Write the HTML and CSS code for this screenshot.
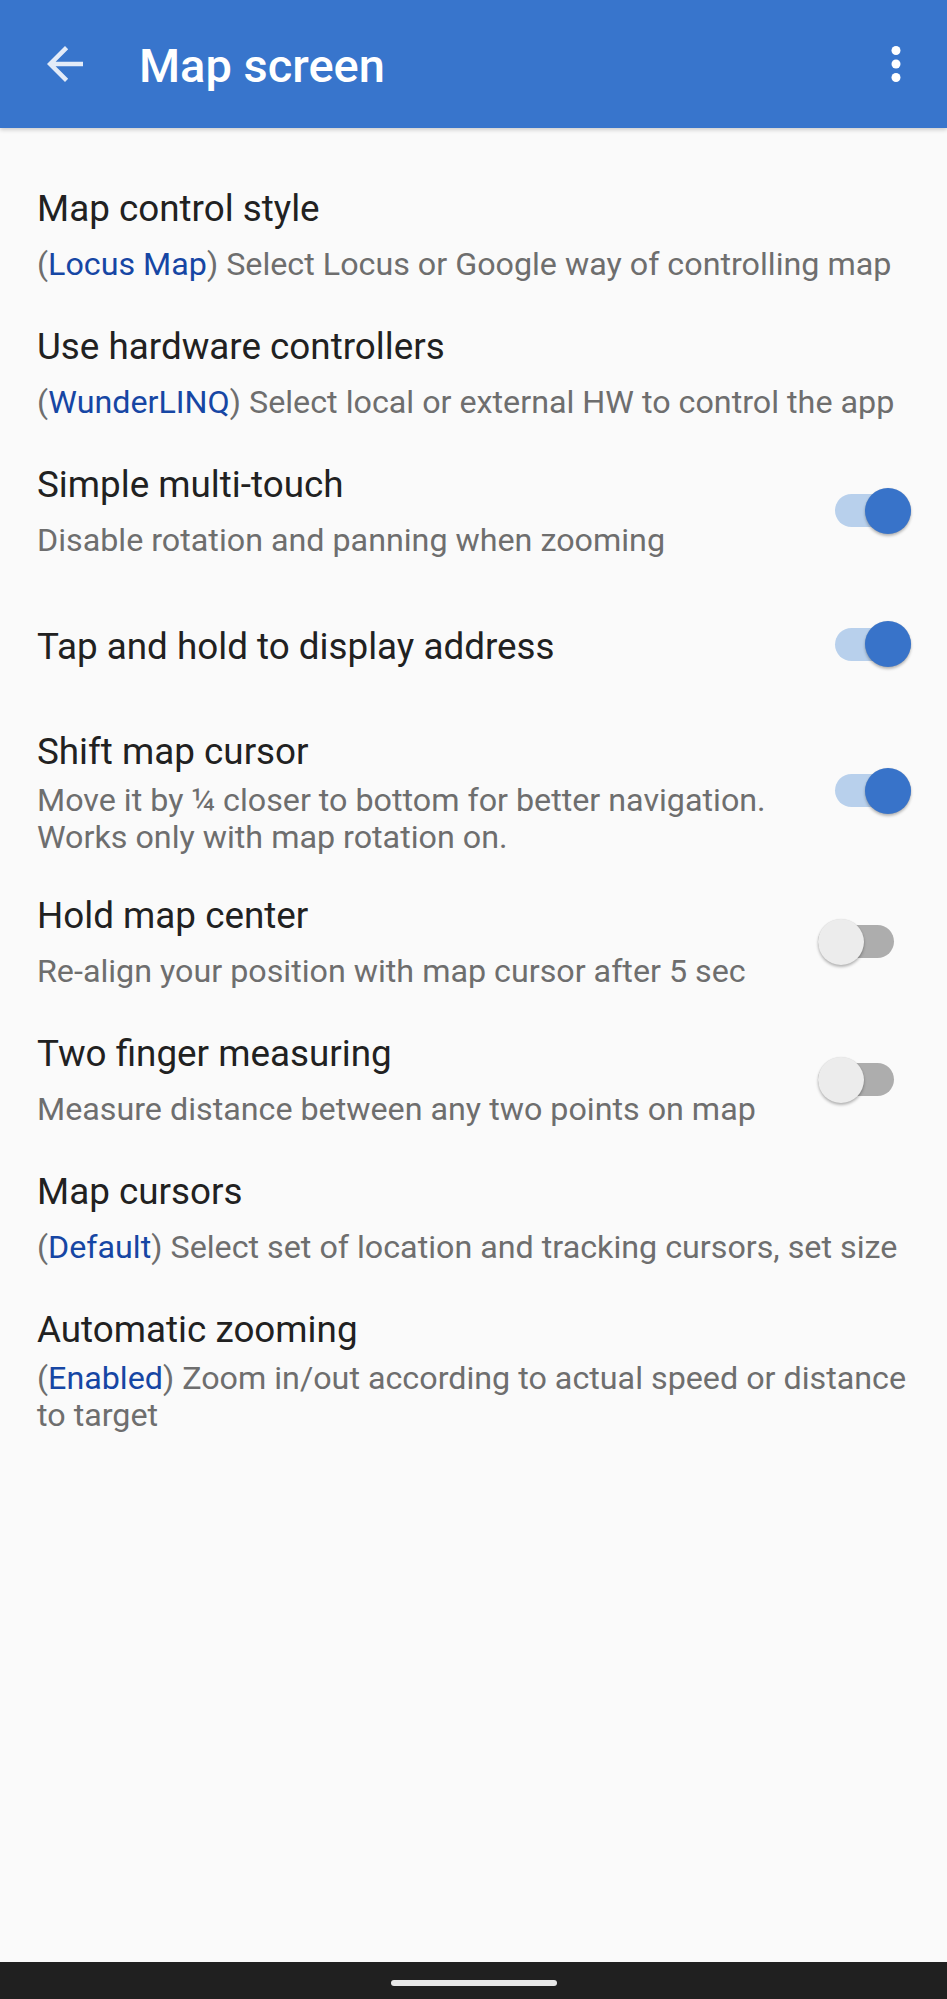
FILE: index.html
```html
<!DOCTYPE html>
<html lang="en">
<head>
<meta charset="utf-8">
<title>Map screen</title>
<link rel="stylesheet" href="styles.css">
</head>
<body>
<div class="screen">
  <header class="appbar">
    <button class="icon-btn back" aria-label="Back">
      <svg viewBox="0 0 24 24"><path d="M20 11H7.83l5.59-5.59L12 4l-8 8 8 8 1.41-1.41L7.83 13H20v-2z"/></svg>
    </button>
    <h1 class="appbar-title">Map screen</h1>
    <button class="icon-btn more" aria-label="More options">
      <svg viewBox="0 0 24 24"><circle cx="12" cy="6" r="2"/><circle cx="12" cy="12" r="2"/><circle cx="12" cy="18" r="2"/></svg>
    </button>
  </header>

  <main class="prefs">
    <div class="pref">
      <div class="pref-text">
        <div class="pref-title">Map control style</div>
        <div class="pref-summary">(<span class="val">Locus Map</span>) Select Locus or Google way of controlling map</div>
      </div>
    </div>

    <div class="pref">
      <div class="pref-text">
        <div class="pref-title">Use hardware controllers</div>
        <div class="pref-summary">(<span class="val">WunderLINQ</span>) Select local or external HW to control the app</div>
      </div>
    </div>

    <div class="pref">
      <div class="pref-text">
        <div class="pref-title">Simple multi-touch</div>
        <div class="pref-summary">Disable rotation and panning when zooming</div>
      </div>
      <div class="switch on"><span class="track"></span><span class="thumb"></span></div>
    </div>

    <div class="pref single">
      <div class="pref-text">
        <div class="pref-title">Tap and hold to display address</div>
      </div>
      <div class="switch on"><span class="track"></span><span class="thumb"></span></div>
    </div>

    <div class="pref">
      <div class="pref-text">
        <div class="pref-title">Shift map cursor</div>
        <div class="pref-summary multi">Move it by ¼ closer to bottom for better navigation. Works only with map rotation on.</div>
      </div>
      <div class="switch on"><span class="track"></span><span class="thumb"></span></div>
    </div>

    <div class="pref">
      <div class="pref-text">
        <div class="pref-title">Hold map center</div>
        <div class="pref-summary">Re-align your position with map cursor after 5 sec</div>
      </div>
      <div class="switch off"><span class="track"></span><span class="thumb"></span></div>
    </div>

    <div class="pref">
      <div class="pref-text">
        <div class="pref-title">Two finger measuring</div>
        <div class="pref-summary">Measure distance between any two points on map</div>
      </div>
      <div class="switch off"><span class="track"></span><span class="thumb"></span></div>
    </div>

    <div class="pref">
      <div class="pref-text">
        <div class="pref-title">Map cursors</div>
        <div class="pref-summary">(<span class="val">Default</span>) Select set of location and tracking cursors, set size</div>
      </div>
    </div>

    <div class="pref">
      <div class="pref-text">
        <div class="pref-title">Automatic zooming</div>
        <div class="pref-summary multi">(<span class="val">Enabled</span>) Zoom in/out according to actual speed or distance to target</div>
      </div>
    </div>
  </main>

  <div class="navbar"><span class="handle"></span></div>
</div>
</body>
</html>
```

FILE: styles.css
```css
* { box-sizing: border-box; }

html, body {
  margin: 0;
  padding: 0;
  background: #fafafa;
}

body {
  font-family: Roboto, "Noto Sans", "Liberation Sans", sans-serif;
  width: 947px;
  height: 1999px;
  overflow: hidden;
}

.screen {
  display: flex;
  flex-direction: column;
  height: 1999px;
}

/* ---------- App bar ---------- */
.appbar {
  position: relative;
  z-index: 1;
  flex: 0 0 128px;
  height: 128px;
  background: #3875cc;
  display: flex;
  align-items: center;
  padding: 0 24px 0 38px;
  box-shadow: 0 2px 4px rgba(0, 0, 0, 0.18);
}

.icon-btn {
  width: 54px;
  height: 54px;
  padding: 0;
  border: 0;
  background: transparent;
  display: flex;
  align-items: center;
  justify-content: center;
}

.icon-btn svg {
  width: 54px;
  height: 54px;
  display: block;
}

.back svg { fill: rgba(255, 255, 255, 0.86); }
.more svg { fill: #ffffff; }

.appbar-title {
  flex: 1;
  margin: 4px 0 0 47px;
  color: #ffffff;
  font-size: 47px;
  font-weight: 500;
  line-height: 56px;
  letter-spacing: 0;
}

/* ---------- Preferences ---------- */
.prefs {
  flex: 1;
  padding-top: 40px;
}

.pref {
  display: flex;
  align-items: center;
  padding: 18.5px 0 23.5px 37px;
}

.pref.single { min-height: 129px; }
.pref.single .pref-title { margin-top: 5px; }

.pref-text {
  flex: 1;
  min-width: 0;
  padding-right: 20px;
}

.pref-title {
  font-size: 36.8px;
  line-height: 44px;
  color: #212121;
}

.pref-summary {
  margin-top: 15px;
  font-size: 32.25px;
  line-height: 37px;
  color: #6e6e6e;
}

.pref-summary.multi {
  margin-top: 8px;
  margin-bottom: -4px;
}

.val { color: #1646a4; }

/* ---------- Switches ---------- */
.switch {
  position: relative;
  flex: 0 0 76px;
  width: 76px;
  height: 46px;
}

.switch.on { margin-right: 36px; margin-left: 17px; }
.switch.off { margin-right: 53px; }

.track {
  position: absolute;
  left: 0;
  right: 0;
  top: 6.5px;
  height: 33px;
  border-radius: 16.5px;
}

.thumb {
  position: absolute;
  top: 0;
  width: 46px;
  height: 46px;
  border-radius: 50%;
  box-shadow: 0 2px 3px rgba(0, 0, 0, 0.28), 0 0 1px rgba(0, 0, 0, 0.12);
}

.switch.on .track { background: #b8d0ec; }
.switch.on .thumb { right: 0; background: #3873c9; }

.switch.off .track { background: #adadad; }
.switch.off .thumb { left: 0; background: #ececec; }

/* ---------- Navigation bar ---------- */
.navbar {
  flex: 0 0 37px;
  height: 37px;
  background: #202020;
  display: flex;
  justify-content: center;
  padding-top: 18px;
}

.handle {
  display: block;
  width: 166px;
  height: 6px;
  border-radius: 3px;
  background: #e8e8e8;
}
```
